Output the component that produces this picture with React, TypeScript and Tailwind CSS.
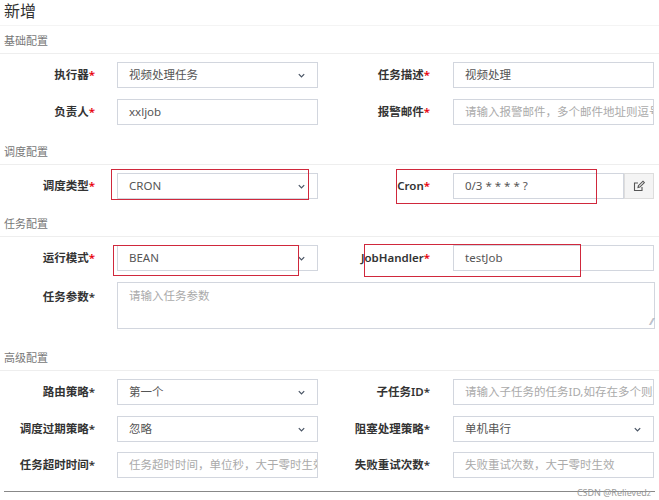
import React from "react"

const font = { fontFamily: '"Noto Sans", "Noto Sans CJK SC", sans-serif' }

function Chevron() {
  return (
    <svg width="9" height="9" viewBox="0 0 10 10" className="text-gray-600 shrink-0">
      <path d="M2 3.5 L5 6.5 L8 3.5" fill="none" stroke="currentColor" strokeWidth="1.4" />
    </svg>
  )
}

function Label({ text, red = true, w = "w-[95px]" }: { text: string; red?: boolean; w?: string }) {
  return (
    <div className={`${w} shrink-0 text-right text-[11.5px] font-semibold text-[#333]`}>
      {text}
      <span className={red ? "text-red-600" : "text-[#333]"}>*</span>
    </div>
  )
}

function Field({ value, placeholder, select, w = "w-[201px]" }: { value?: string; placeholder?: string; select?: boolean; w?: string }) {
  return (
    <div className={`${w} h-[26px] shrink-0 border border-[#d2d6de] flex items-center justify-between px-[11px] text-[11.5px] overflow-hidden`}>
      <span className={value ? "text-[#555]" : "text-[#aaa] whitespace-nowrap"}>{value ?? placeholder}</span>
      {select && <Chevron />}
    </div>
  )
}

function Heading({ text }: { text: string }) {
  return (
    <div className="h-[28px] flex items-end pl-[4px] pb-[4px] border-b border-[#eee] text-[11px] text-[#777]">{text}</div>
  )
}

function Row({ children, className = "" }: { children: React.ReactNode; className?: string }) {
  return <div className={`flex items-center ${className}`}>{children}</div>
}

export default function App() {
  return (
    <div className="relative w-[659px] h-[500px] bg-white overflow-hidden" style={font}>
      <div className="h-[24px] pl-[4px] text-[16px] leading-[22px] text-[#333]">新增</div>
      <div className="h-[2px] border-b border-[#f4f4f4]" />
      <Heading text="基础配置" />
      <Row className="mt-[8px] h-[26px]">
        <Label text="执行器" />
        <div className="w-[22px]" />
        <Field value="视频处理任务" select />
        <Label text="任务描述" w="w-[112px]" />
        <div className="w-[23px]" />
        <Field value="视频处理" />
      </Row>
      <Row className="mt-[11px] h-[26px]">
        <Label text="负责人" />
        <div className="w-[22px]" />
        <Field value="xxljob" />
        <Label text="报警邮件" w="w-[112px]" />
        <div className="w-[23px]" />
        <Field placeholder="请输入报警邮件，多个邮件地址则逗号分隔" />
      </Row>
      <div className="h-[12px]" />
      <Heading text="调度配置" />
      <Row className="mt-[8px] h-[26px]">
        <Label text="调度类型" />
        <div className="w-[22px]" />
        <Field value="CRON" select />
        <Label text="Cron" w="w-[112px]" />
        <div className="w-[23px]" />
        <Field value="0/3 * * * * ?" w="w-[171px]" />
        <div className="w-[30px] h-[26px] bg-[#f4f4f4] border border-[#ddd] flex items-center justify-center">
          <svg width="12" height="12" viewBox="0 0 12 12" fill="none" stroke="#555" strokeWidth="1.1">
            <path d="M9 7v3.5H1.5V3H5" />
            <path d="M5 7.5l.4-1.8L10 1.2l1.4 1.4-4.6 4.5z" />
          </svg>
        </div>
      </Row>
      <div className="h-[10px]" />
      <Heading text="任务配置" />
      <Row className="mt-[8px] h-[26px]">
        <Label text="运行模式" />
        <div className="w-[22px]" />
        <Field value="BEAN" select />
        <Label text="JobHandler" w="w-[112px]" />
        <div className="w-[23px]" />
        <Field value="testJob" />
      </Row>
      <Row className="mt-[11px] items-start">
        <div className="pt-[6px]"><Label text="任务参数" red={false} /></div>
        <div className="w-[22px]" />
        <div className="w-[538px] h-[47px] border border-[#d2d6de] px-[11px] pt-[4px] text-[11.5px] text-[#aaa] relative">
          请输入任务参数
          <span className="absolute right-[1px] bottom-[0px] text-[9px] text-gray-400">⁄⁄</span>
        </div>
      </Row>
      <div className="h-[14px]" />
      <Heading text="高级配置" />
      <Row className="mt-[8px] h-[26px]">
        <Label text="路由策略" red={false} />
        <div className="w-[22px]" />
        <Field value="第一个" select />
        <Label text="子任务ID" red={false} w="w-[112px]" />
        <div className="w-[23px]" />
        <Field placeholder="请输入子任务的任务ID,如存在多个则逗号分隔" />
      </Row>
      <Row className="mt-[11px] h-[26px]">
        <Label text="调度过期策略" red={false} />
        <div className="w-[22px]" />
        <Field value="忽略" select />
        <Label text="阻塞处理策略" red={false} w="w-[112px]" />
        <div className="w-[23px]" />
        <Field value="单机串行" select />
      </Row>
      <Row className="mt-[10px] h-[26px]">
        <Label text="任务超时时间" red={false} />
        <div className="w-[22px]" />
        <Field placeholder="任务超时时间，单位秒，大于零时生效" />
        <Label text="失败重试次数" red={false} w="w-[112px]" />
        <div className="w-[23px]" />
        <Field placeholder="失败重试次数，大于零时生效" />
      </Row>
      <div className="mt-[13px] mx-[4px] border-b border-[#888]" />
      <div className="absolute right-[8px] bottom-[1px] text-[9px] text-[#999]">CSDN @Relievedz</div>

      {/* red highlight boxes */}
      <div className="absolute left-[111px] top-[169px] w-[198px] h-[31px] border border-[#d0283c]" />
      <div className="absolute left-[396px] top-[169px] w-[201px] h-[35px] border border-[#d0283c]" />
      <div className="absolute left-[113px] top-[245px] w-[186px] h-[31px] border border-[#d0283c]" />
      <div className="absolute left-[364px] top-[244px] w-[217px] h-[33px] border border-[#d0283c]" />
    </div>
  )
}
